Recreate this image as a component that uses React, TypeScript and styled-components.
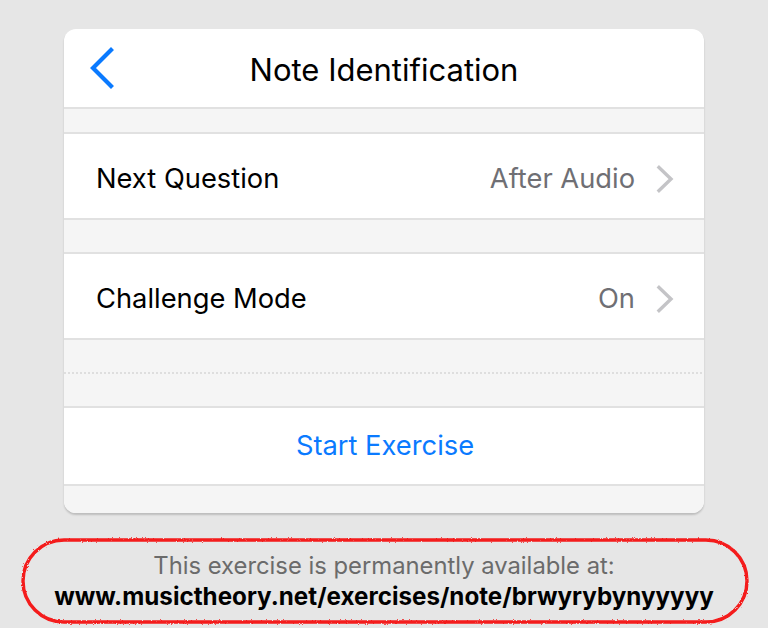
import React from "react";
import styled, { createGlobalStyle } from "styled-components";

const GlobalStyle = createGlobalStyle`
  html, body {
    margin: 0;
    padding: 0;
    background: #e6e6e6;
  }
  body {
    font-family: Inter, "Noto Sans", "Liberation Sans", sans-serif;
    -webkit-font-smoothing: antialiased;
  }
`;

const Page = styled.div`
  width: 768px;
  height: 628px;
  padding-top: 29px;
  box-sizing: border-box;
  display: flex;
  flex-direction: column;
  align-items: center;
  overflow: hidden;
`;

const Card = styled.div`
  width: 640px;
  background: #ffffff;
  border-radius: 12px;
  overflow: hidden;
  box-shadow: 0 2px 2px rgba(0, 0, 0, 0.18);
  display: flex;
  flex-direction: column;
`;

const Header = styled.div`
  height: 80px;
  box-sizing: border-box;
  padding-top: 2px;
  display: grid;
  grid-template-columns: 80px 1fr 80px;
  align-items: center;
  border-bottom: 2px solid #e1e1e1;
`;

const BackButton = styled.div`
  padding-left: 24px;
  padding-bottom: 2px;
  display: flex;
  align-items: center;
`;

const Title = styled.div`
  text-align: center;
  font-size: 31px;
  color: #000;
`;

const Gap = styled.div<{ $h: number }>`
  height: ${(p) => p.$h}px;
  background: #f5f5f5;
  display: flex;
  flex-direction: column;
  justify-content: center;
`;

const DottedLine = styled.div`
  height: 2px;
  background-image: linear-gradient(to right, #dedede 50%, transparent 50%);
  background-size: 4px 2px;
  background-repeat: repeat-x;
`;

const Row = styled.div<{ $h: number; $center?: boolean }>`
  border-top: 2px solid #e1e1e1;
  border-bottom: 2px solid #e1e1e1;
  padding: 5px 30px 0 32px;
  box-sizing: border-box;
  height: ${(p) => p.$h + 4}px;
  display: flex;
  align-items: center;
  justify-content: ${(p) => (p.$center ? "center" : "space-between")};
  font-size: 27.3px;
`;

const Label = styled.span`
  color: #000;
`;

const ValueGroup = styled.span`
  display: flex;
  align-items: center;
  gap: 21px;
`;

const Value = styled.span`
  color: #6f6f74;
`;

const ActionText = styled.span`
  color: #0a7aff;
  margin-top: -6px;
`;

const Footer = styled.div`
  position: relative;
  width: 768px;
  margin-top: 37px;
  display: flex;
  flex-direction: column;
  align-items: center;
`;

const Note = styled.div`
  color: #6b6b6b;
  font-size: 23.8px;
  line-height: 31px;
`;

const Link = styled.div`
  color: #000;
  font-weight: 700;
  font-size: 24.2px;
  line-height: 31px;
`;

const Scribble = styled.svg`
  position: absolute;
  left: 20px;
  top: -13px;
  width: 730px;
  height: 88px;
  pointer-events: none;
`;

const ChevronLeft = () => (
  <svg width="26" height="44" viewBox="0 0 26 44">
    <path
      d="M23 4 L5 22 L23 40"
      fill="none"
      stroke="#0a7aff"
      strokeWidth="4.2"
      strokeLinecap="square"
      strokeLinejoin="miter"
    />
  </svg>
);

const ChevronRight = () => (
  <svg width="18" height="28" viewBox="0 0 18 28">
    <path
      d="M3 2.5 L15 14 L3 25.5"
      fill="none"
      stroke="#c4c4c7"
      strokeWidth="3.4"
      strokeLinecap="square"
    />
  </svg>
);

export default function App() {
  return (
    <>
      <GlobalStyle />
      <Page>
        <Card>
          <Header>
            <BackButton>
              <ChevronLeft />
            </BackButton>
            <Title>Note Identification</Title>
            <div />
          </Header>
          <Gap $h={23} />
          <Row $h={84}>
            <Label>Next Question</Label>
            <ValueGroup>
              <Value>After Audio</Value>
              <ChevronRight />
            </ValueGroup>
          </Row>
          <Gap $h={32} />
          <Row $h={84}>
            <Label>Challenge Mode</Label>
            <ValueGroup>
              <Value>On</Value>
              <ChevronRight />
            </ValueGroup>
          </Row>
          <Gap $h={66}>
            <DottedLine />
          </Gap>
          <Row $h={76} $center>
            <ActionText>Start Exercise</ActionText>
          </Row>
          <Gap $h={27} />
        </Card>
        <Footer>
          <Note>This exercise is permanently available at:</Note>
          <Link>www.musictheory.net/exercises/note/brwyrybynyyyyy</Link>
          <Scribble viewBox="0 0 730 88">
            <defs>
              <filter id="rough" x="-5%" y="-20%" width="110%" height="140%">
                <feTurbulence type="fractalNoise" baseFrequency="1.2" numOctaves="2" result="n" />
                <feDisplacementMap in="SourceGraphic" in2="n" scale="2.5" />
              </filter>
            </defs>
            <rect
              x="3"
              y="3"
              width="724"
              height="82"
              rx="41"
              ry="41"
              fill="none"
              stroke="#f41a1a"
              strokeWidth="3.4"
              filter="url(#rough)"
            />
          </Scribble>
        </Footer>
      </Page>
    </>
  );
}
